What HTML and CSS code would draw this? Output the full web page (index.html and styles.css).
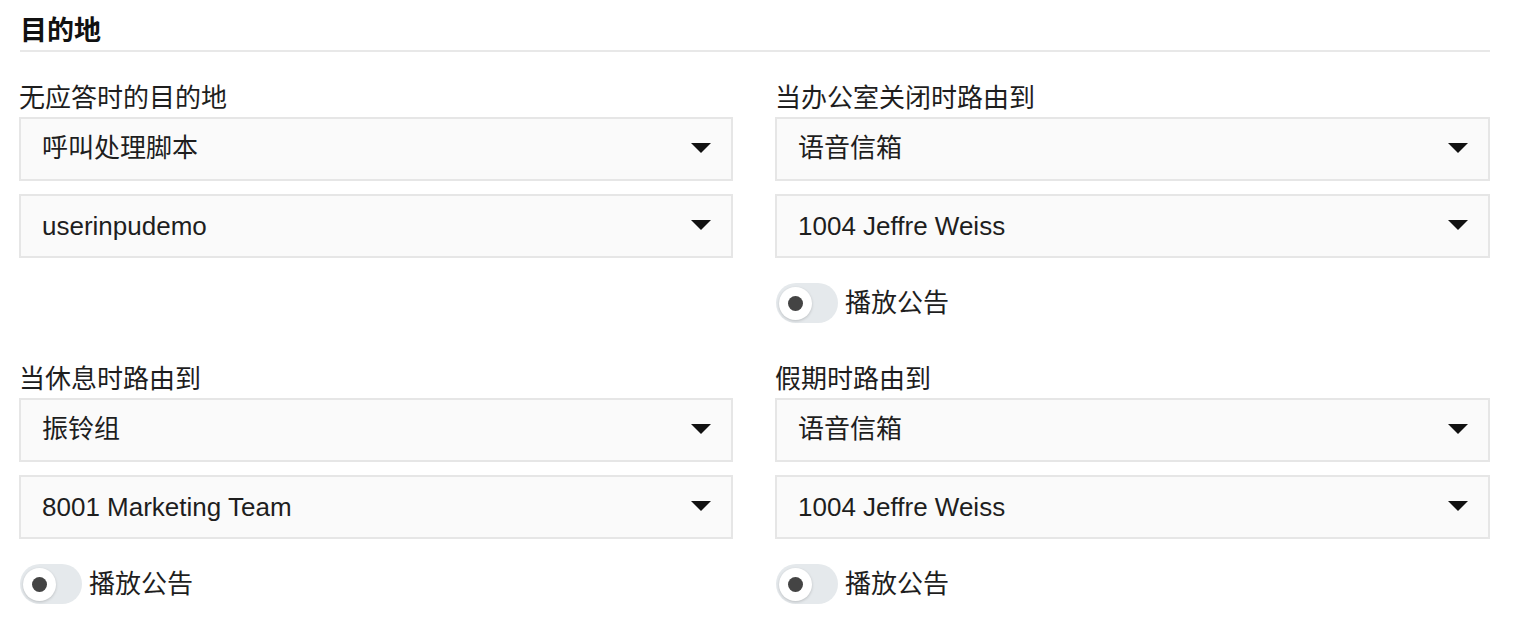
FILE: index.html
```html
<!DOCTYPE html>
<html lang="zh">
<head>
<meta charset="utf-8">
<title>目的地</title>
<link rel="stylesheet" href="styles.css">
</head>
<body>
<div class="page">
  <h2 class="section-title">目的地</h2>
  <div class="grid">
    <div class="group">
      <div class="label">无应答时的目的地</div>
      <div class="select"><span class="value cjk">呼叫处理脚本</span><span class="arrow"></span></div>
      <div class="select"><span class="value">userinpudemo</span><span class="arrow"></span></div>
    </div>
    <div class="group">
      <div class="label">当办公室关闭时路由到</div>
      <div class="select"><span class="value cjk">语音信箱</span><span class="arrow"></span></div>
      <div class="select"><span class="value">1004 Jeffre Weiss</span><span class="arrow"></span></div>
      <div class="toggle-row"><span class="toggle"><span class="knob"></span></span><span class="toggle-text">播放公告</span></div>
    </div>
    <div class="group">
      <div class="label">当休息时路由到</div>
      <div class="select"><span class="value cjk">振铃组</span><span class="arrow"></span></div>
      <div class="select"><span class="value">8001 Marketing Team</span><span class="arrow"></span></div>
      <div class="toggle-row"><span class="toggle"><span class="knob"></span></span><span class="toggle-text">播放公告</span></div>
    </div>
    <div class="group">
      <div class="label">假期时路由到</div>
      <div class="select"><span class="value cjk">语音信箱</span><span class="arrow"></span></div>
      <div class="select"><span class="value">1004 Jeffre Weiss</span><span class="arrow"></span></div>
      <div class="toggle-row"><span class="toggle"><span class="knob"></span></span><span class="toggle-text">播放公告</span></div>
    </div>
  </div>
</div>
</body>
</html>
```
FILE: styles.css
```css
html, body {
  margin: 0;
  padding: 0;
  background: #ffffff;
}
body {
  font-family: "Liberation Sans", "Noto Sans CJK SC", sans-serif;
  color: #1e1e1e;
}
.page {
  padding: 0 0 0 19px;
}
.section-title {
  width: 1470px;
  margin: 0 0 0 1px;
  padding: 14px 0 2px;
  font-size: 27px;
  line-height: 34px;
  font-weight: 700;
  color: #111;
  border-bottom: 2px solid #e8e8e8;
}
.grid {
  display: grid;
  grid-template-columns: 714px 715px;
  column-gap: 42px;
  row-gap: 40px;
  margin-top: 30px;
}
.group {
  display: flex;
  flex-direction: column;
}
.label {
  font-size: 26px;
  line-height: 32px;
  margin-bottom: 3px;
}
.select {
  box-sizing: border-box;
  height: 64px;
  border: 2px solid #e6e6e6;
  background: #fafafa;
  display: flex;
  align-items: center;
  justify-content: space-between;
  padding: 0 20px 0 21px;
  font-size: 26px;
}
.value {
  line-height: 32px;
}
.value.cjk {
  padding-bottom: 2px;
}
.select + .select {
  margin-top: 13px;
}
.arrow {
  width: 0;
  height: 0;
  border-left: 10px solid transparent;
  border-right: 10px solid transparent;
  border-top: 10px solid #111;
  margin-top: -3px;
}
.toggle-row {
  display: flex;
  align-items: center;
  margin-top: 25px;
  height: 40px;
  padding-left: 1px;
}
.toggle {
  width: 62px;
  height: 40px;
  border-radius: 20px;
  background: #e5e9ec;
  display: flex;
  align-items: center;
  padding-left: 3px;
  box-sizing: border-box;
}
.knob {
  width: 33px;
  height: 33px;
  border-radius: 50%;
  background: #fff;
  box-shadow: 0 1px 3px rgba(0,0,0,0.18);
  display: flex;
  align-items: center;
  justify-content: center;
}
.knob::after {
  content: "";
  width: 15px;
  height: 15px;
  border-radius: 50%;
  background: #444;
}
.toggle-text {
  font-size: 26px;
  line-height: 32px;
  margin-left: 7px;
}
```
